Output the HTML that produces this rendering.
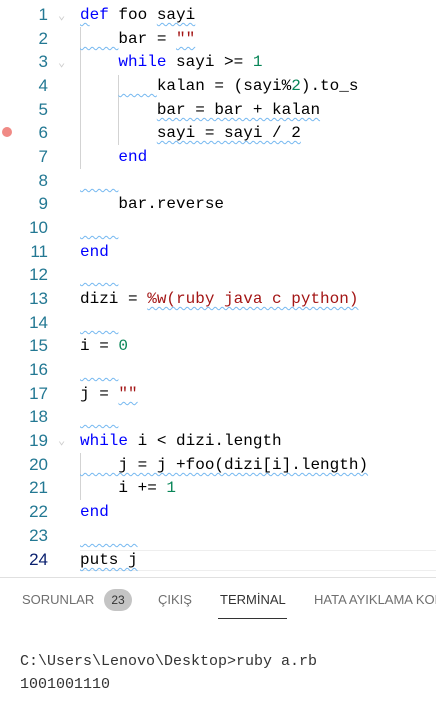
<!DOCTYPE html>
<html><head><meta charset="utf-8"><style>
body{margin:0;width:436px;height:701px;background:#fff;overflow:hidden;position:relative;font-family:"Liberation Mono",monospace}
.ln{position:absolute;left:0;width:48px;text-align:right;color:#237893;font-size:17px;line-height:24px;font-family:"Liberation Sans",sans-serif}
.cd{position:absolute;left:80px;font-size:16px;line-height:24px;color:#000;white-space:pre}
.k{color:#0000ff}.s{color:#a31515}.n{color:#098658}
.w{text-decoration:underline wavy #75b8f0;text-decoration-thickness:1px;text-underline-offset:3px}
.g{position:absolute;width:1px;background:#d3d3d3}
.tab{position:absolute;top:592px;font-family:"Liberation Sans",sans-serif;font-size:13px;color:#6f6f6f;white-space:nowrap}
.t{position:absolute;left:20px;font-size:15px;color:#333;white-space:pre}
</style></head><body>
<div style="position:absolute;left:80px;top:550px;width:356px;height:21px;border-top:1px solid #eee;border-bottom:1px solid #eee;box-sizing:border-box"></div>
<div class="g" style="left:80px;top:27px;height:142px"></div>
<div class="g" style="left:118px;top:75px;height:70px"></div>
<div class="g" style="left:80px;top:453px;height:47px"></div>
<div style="position:absolute;left:2px;top:127px;width:10px;height:10px;border-radius:50%;background:#f08a85"></div>
<div style="position:absolute;left:58px;top:8px;color:#ccc;font-size:12px">&#8964;</div>
<div style="position:absolute;left:58px;top:55px;color:#ccc;font-size:12px">&#8964;</div>
<div style="position:absolute;left:58px;top:433px;color:#ccc;font-size:12px">&#8964;</div>

<div class="ln" style="top:3px">1</div><div class="cd" style="top:3px"><span class="k w">d</span><span class="k">ef</span> foo <span class="w">sayi</span></div>
<div class="ln" style="top:27px">2</div><div class="cd" style="top:27px"><span class="w">    </span>bar = <span class="s w">""</span></div>
<div class="ln" style="top:50px">3</div><div class="cd" style="top:50px">    <span class="k">while</span> sayi &gt;= <span class="n">1</span></div>
<div class="ln" style="top:74px">4</div><div class="cd" style="top:74px">    <span class="w">    </span>kalan = (sayi%<span class="n">2</span>).to_s</div>
<div class="ln" style="top:98px">5</div><div class="cd" style="top:98px">        <span class="w">bar = bar + kalan</span></div>
<div class="ln" style="top:121px">6</div><div class="cd" style="top:121px">        <span class="w">sayi = sayi / 2</span></div>
<div class="ln" style="top:145px">7</div><div class="cd" style="top:145px">    <span class="k">end</span></div>
<div class="ln" style="top:169px">8</div><div class="cd" style="top:169px"><span class="w">    </span></div>
<div class="ln" style="top:192px">9</div><div class="cd" style="top:192px">    bar.reverse</div>
<div class="ln" style="top:216px">10</div><div class="cd" style="top:216px"><span class="w">    </span></div>
<div class="ln" style="top:240px">11</div><div class="cd" style="top:240px"><span class="k">end</span></div>
<div class="ln" style="top:263px">12</div><div class="cd" style="top:263px"><span class="w">    </span></div>
<div class="ln" style="top:287px">13</div><div class="cd" style="top:287px">dizi = <span class="s w">%w(ruby java c python)</span></div>
<div class="ln" style="top:311px">14</div><div class="cd" style="top:311px"><span class="w">    </span></div>
<div class="ln" style="top:334px">15</div><div class="cd" style="top:334px">i = <span class="n">0</span></div>
<div class="ln" style="top:358px">16</div><div class="cd" style="top:358px"><span class="w">    </span></div>
<div class="ln" style="top:382px">17</div><div class="cd" style="top:382px">j = <span class="s w">""</span></div>
<div class="ln" style="top:405px">18</div><div class="cd" style="top:405px"><span class="w">    </span></div>
<div class="ln" style="top:429px">19</div><div class="cd" style="top:429px"><span class="k">while</span> i &lt; dizi.length</div>
<div class="ln" style="top:453px">20</div><div class="cd" style="top:453px"><span class="w">    j = j +foo(dizi[i].length)</span></div>
<div class="ln" style="top:476px">21</div><div class="cd" style="top:476px">    i += <span class="n">1</span></div>
<div class="ln" style="top:500px">22</div><div class="cd" style="top:500px"><span class="k">end</span></div>
<div class="ln" style="top:524px">23</div><div class="cd" style="top:524px"><span class="w">      </span></div>
<div class="ln" style="top:548px;color:#0b216f">24</div><div class="cd" style="top:548px"><span class="w">puts j</span></div>

<div style="position:absolute;left:0;top:577px;width:436px;height:1px;background:#e0e0e0"></div>
<div class="tab" style="left:22px">SORUNLAR</div>
<div style="position:absolute;left:104px;top:589px;width:28px;height:22px;border-radius:11px;background:#c4c4c4;color:#333;font-family:'Liberation Sans',sans-serif;font-size:12px;text-align:center;line-height:22px">23</div>
<div class="tab" style="left:158px">ÇIKIŞ</div>
<div class="tab" style="left:220px;color:#333">TERMİNAL</div>
<div style="position:absolute;left:218px;top:618px;width:69px;height:1px;background:#333"></div>
<div class="tab" style="left:314px;width:122px;overflow:hidden">HATA AYIKLAMA KONSOLU</div>
<div class="t" style="top:653px">C:\Users\Lenovo\Desktop&gt;ruby a.rb</div>
<div class="t" style="top:676px">1001001110</div>
</body></html>
